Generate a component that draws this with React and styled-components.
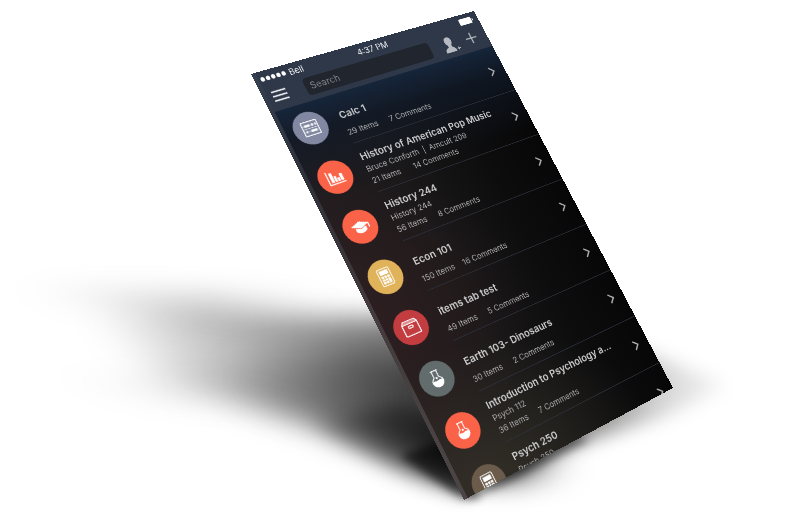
import React from "react";
import styled, { createGlobalStyle } from "styled-components";

const SCREEN_WIDTH = 375;
const SCREEN_HEIGHT = 667;

/* Corners of the tilted phone: top left, top right, bottom right, bottom left. */
const CORNERS = [
  [251, 74],
  [474, 11],
  [673, 388],
  [464, 500],
];

/* Perspective matrix that lays a w x h box onto four corners. */
function perspectiveOnto(w, h, [[x0, y0], [x1, y1], [x2, y2], [x3, y3]]) {
  const dx1 = x1 - x2;
  const dx2 = x3 - x2;
  const sx = x0 - x1 + x2 - x3;
  const dy1 = y1 - y2;
  const dy2 = y3 - y2;
  const sy = y0 - y1 + y2 - y3;
  const den = dx1 * dy2 - dx2 * dy1;
  const g = (sx * dy2 - dx2 * sy) / den;
  const k = (dx1 * sy - sx * dy1) / den;
  const m = [
    (x1 - x0 + g * x1) / w, (y1 - y0 + g * y1) / w, 0, g / w,
    (x3 - x0 + k * x3) / h, (y3 - y0 + k * y3) / h, 0, k / h,
    0, 0, 1, 0,
    x0, y0, 0, 1,
  ];
  return `matrix3d(${m.map((n) => n.toFixed(8)).join(",")})`;
}

const GlobalStyle = createGlobalStyle`
  *, *::before, *::after { box-sizing: border-box; }
  body {
    margin: 0;
    background: #fff;
    font-family: Inter, Roboto, "Liberation Sans", sans-serif;
  }
`;

const Page = styled.main`
  display: flex;
  justify-content: center;
  overflow: hidden;
`;

const Scene = styled.div`
  position: relative;
  flex: 0 1 796px;
  aspect-ratio: 398 / 261;
`;

const Shadow = styled.svg`
  display: block;
  width: 100%;
  height: 100%;
`;

const Phone = styled.div`
  position: absolute;
  top: 0;
  left: 0;
  width: ${SCREEN_WIDTH}px;
  height: ${SCREEN_HEIGHT}px;
  display: flex;
  flex-direction: column;
  overflow: hidden;
  transform-origin: 0 0;
  transform: ${perspectiveOnto(SCREEN_WIDTH, SCREEN_HEIGHT, CORNERS)};
  color: #cdcdcf;
  background:
    radial-gradient(ellipse 240px 200px at 0 390px, rgba(66, 34, 34, 0.35), transparent),
    radial-gradient(ellipse 280px 200px at 40px 667px, rgba(62, 58, 44, 0.6), transparent),
    linear-gradient(to bottom, #16253a 64px, rgba(17, 26, 40, 0.8) 110px, transparent 210px),
    linear-gradient(to right, #231d20, #1b191a 35%, #0d0d0e 72%, #070708);

  &::after {
    content: "";
    position: absolute;
    inset: 0 auto 0 0;
    width: 6px;
    background: linear-gradient(to bottom, #354050, #2f323b 25%, #423a3c 55%, #4b4645);
  }
`;

const Header = styled.header`
  flex: none;
  background: #2e3848;
`;

const StatusBar = styled.div`
  display: grid;
  grid-template-columns: 1fr auto 1fr;
  align-items: center;
  height: 25px;
  padding: 0 9px;
  font-size: 13px;
  color: #f4f4f6;
`;

const Carrier = styled.span`
  display: flex;
  align-items: center;
  gap: 2px;
`;

const SignalDot = styled.i`
  width: 6px;
  height: 7px;
  border-radius: 50%;
  background: #fff;
`;

const CarrierName = styled.span`
  margin-left: 3px;
`;

const Battery = styled.svg`
  justify-self: end;
  width: 25px;
  height: 11px;
`;

const NavBar = styled.div`
  display: flex;
  align-items: center;
  height: 39px;
  padding: 0 18px 6px 14px;
`;

const IconButton = styled.button`
  display: flex;
  flex: none;
  padding: 0;
  border: 0;
  background: none;
  color: ${(p) => p.$color || "#b7bac0"};
  cursor: pointer;
`;

const SearchField = styled.input`
  flex: 1;
  min-width: 0;
  height: 28px;
  margin: 0 23px 0 28px;
  padding: 0 8px;
  border: 0;
  border-radius: 6px;
  background: #20252e;
  color: #c9c9cb;
  font: 400 14px Inter, Roboto, sans-serif;

  &::placeholder {
    color: #85878b;
    opacity: 1;
  }
`;

const Actions = styled.div`
  display: flex;
  align-items: center;
  gap: 14px;
`;

const CourseList = styled.ul`
  flex: none;
  margin: 0;
  padding: 0;
  list-style: none;
`;

const CourseLink = styled.a`
  display: flex;
  height: 80px;
  padding-left: 18px;
  color: inherit;
  text-decoration: none;
`;

const Badge = styled.span`
  display: flex;
  flex: none;
  align-items: center;
  justify-content: center;
  width: 51px;
  height: 51px;
  margin: 13px 22px 0 0;
  border-radius: 50%;
  background: ${(p) => p.$color};
  color: #fff;
`;

const Details = styled.span`
  display: flex;
  flex: 1;
  align-items: center;
  justify-content: space-between;
  min-width: 0;
  padding-right: 17px;
  border-bottom: 1px solid #2d323d;
`;

const Lines = styled.span`
  display: flex;
  flex-direction: column;
  justify-content: flex-end;
  height: 100%;
  padding-bottom: 8px;
`;

const Title = styled.strong`
  margin-bottom: ${(p) => (p.$spaced ? "8px" : "0")};
  font-size: 15px;
  font-weight: 600;
  line-height: 20px;
  white-space: nowrap;
`;

const Subtitle = styled.span`
  font-size: 12px;
  font-weight: 400;
  line-height: 19px;
  white-space: pre;
  color: #adadaf;
`;

const Counts = styled.span`
  display: grid;
  grid-template-columns: 68px auto;
  font-size: 12px;
  font-weight: 400;
  line-height: 19px;
  color: #adadaf;
`;

const Chevron = styled.svg`
  flex: none;
  width: 10px;
  height: 16px;
`;

const Glyph = styled.svg`
  width: 27px;
  height: 27px;
`;

const AbacusIcon = () => (
  <Glyph viewBox="0 0 30 30" fill="none" stroke="currentColor">
    <rect x="2" y="3" width="26" height="24" rx="1" strokeWidth="1.6" />
    <path d="M3 10h24M3 15h24M3 20h24" strokeWidth="0.8" />
    <path d="M6 10h9M18 10h3M24 10h2M14 20h10M6 20h2" strokeWidth="4" />
  </Glyph>
);

const ChartIcon = () => (
  <Glyph viewBox="0 0 30 30" fill="currentColor">
    <path d="M1 3h2v22h26v2H1z" />
    <path d="M6 6h5v17H6zM12 13h4v10h-4zM17 17h4v6h-4zM22 11h5v12h-5z" />
  </Glyph>
);

const CapIcon = () => (
  <Glyph viewBox="0 0 30 30" fill="currentColor">
    <path d="M15 6 0 12l15 6 13-5v7h2v-8z" />
    <path d="M6 16v6c5 5 13 5 18 0v-6l-9 3z" />
  </Glyph>
);

const CalculatorIcon = () => (
  <Glyph viewBox="0 0 30 30" fill="currentColor">
    <rect x="5" y="1" width="20" height="28" rx="2" fill="none" stroke="currentColor" strokeWidth="1.5" />
    <path d="M8 4h14v7H8zM8 13h4v4H8zM13 13h4v4h-4zM18 13h4v4h-4zM8 18h4v3H8zM13 18h4v3h-4zM18 18h4v8h-4zM8 22h4v4H8zM13 22h4v4h-4z" />
  </Glyph>
);

const BoxIcon = () => (
  <Glyph viewBox="0 0 30 30" fill="none" stroke="currentColor" strokeWidth="1.8">
    <path d="M5 3h20l3 5v17a2 2 0 0 1-2 2H4a2 2 0 0 1-2-2V8z" />
    <path d="M2 8h26" />
    <path d="M4 5.5h22" strokeOpacity="0.5" />
    <rect x="11" y="12" width="8" height="3.5" rx="1.7" />
  </Glyph>
);

const FlaskIcon = () => (
  <Glyph viewBox="0 0 30 30" fill="none" stroke="currentColor" strokeWidth="1.6">
    <path d="M9 2h12M11 2v11c-3 2-5 4-5 7a9 8 0 0 0 18 0c0-3-2-5-5-7V2" />
    <path d="M7 19c4-2 5 2 8 0 3-1 5-1 8 0 0 6-3 9-8 9s-8-3-8-9z" fill="currentColor" />
    <circle cx="15" cy="14" r="1" fill="currentColor" />
  </Glyph>
);

const COURSES = [
  { title: "Calc 1", items: "29 Items", comments: "7 Comments", color: "#8288a2", Icon: AbacusIcon },
  { title: "History of American Pop Music", subtitle: "Bruce Conforth  |  Amcult 209", items: "21 Items", comments: "14 Comments", color: "#fb6348", Icon: ChartIcon },
  { title: "History 244", subtitle: "History 244", items: "56 Items", comments: "8 Comments", color: "#fb6348", Icon: CapIcon },
  { title: "Econ 101", items: "150 Items", comments: "16 Comments", color: "#e0b35b", Icon: CalculatorIcon },
  { title: "items tab test", items: "49 Items", comments: "5 Comments", color: "#c33d40", Icon: BoxIcon },
  { title: "Earth 103- Dinosaurs", items: "30 Items", comments: "2 Comments", color: "#626c6d", Icon: FlaskIcon },
  { title: "Introduction to Psychology a...", subtitle: "Psych 112", items: "36 Items", comments: "7 Comments", color: "#fb6348", Icon: FlaskIcon },
  { title: "Psych 250", subtitle: "Psych 250", items: "12 Items", comments: "4 Comments", color: "#6b5b4a", Icon: CalculatorIcon },
];

function Course({ title, subtitle, items, comments, color, Icon }) {
  return (
    <li>
      <CourseLink href="#">
        <Badge $color={color}>
          <Icon />
        </Badge>
        <Details>
          <Lines>
            <Title $spaced={!subtitle}>{title}</Title>
            {subtitle && <Subtitle>{subtitle}</Subtitle>}
            <Counts>
              <span>{items}</span>
              <span>{comments}</span>
            </Counts>
          </Lines>
          <Chevron viewBox="0 0 10 16" fill="none" stroke="#b0b1b4" strokeWidth="2.4">
            <path d="M1 1l7 7-7 7" />
          </Chevron>
        </Details>
      </CourseLink>
    </li>
  );
}

function GroundShadow() {
  return (
    <Shadow viewBox="0 0 796 522" aria-hidden="true">
      <defs>
        <linearGradient id="cast" gradientUnits="userSpaceOnUse" x1="80" y1="0" x2="460" y2="0">
          <stop offset="0" stopOpacity="0" />
          <stop offset="0.25" stopOpacity="0.14" />
          <stop offset="0.5" stopOpacity="0.34" />
          <stop offset="0.75" stopOpacity="0.5" />
          <stop offset="1" stopOpacity="0.6" />
        </linearGradient>
        <linearGradient id="core" gradientUnits="userSpaceOnUse" x1="220" y1="0" x2="460" y2="0">
          <stop offset="0" stopOpacity="0" />
          <stop offset="0.5" stopOpacity="0.28" />
          <stop offset="1" stopOpacity="0.56" />
        </linearGradient>
        <linearGradient id="tail" gradientUnits="userSpaceOnUse" x1="10" y1="0" x2="330" y2="0">
          <stop offset="0" stopOpacity="0" />
          <stop offset="0.6" stopOpacity="0.18" />
          <stop offset="1" stopOpacity="0" />
        </linearGradient>
        <linearGradient id="side" gradientUnits="userSpaceOnUse" x1="470" y1="0" x2="740" y2="0">
          <stop offset="0" stopOpacity="0.95" />
          <stop offset="0.4" stopOpacity="0.5" />
          <stop offset="0.7" stopOpacity="0.17" />
          <stop offset="1" stopOpacity="0" />
        </linearGradient>
        <filter id="wide" x="-30%" y="-80%" width="160%" height="260%">
          <feGaussianBlur stdDeviation="24 13" />
        </filter>
        <filter id="soft" x="-30%" y="-80%" width="160%" height="260%">
          <feGaussianBlur stdDeviation="18 15" />
        </filter>
        <filter id="medium" x="-30%" y="-50%" width="160%" height="200%">
          <feGaussianBlur stdDeviation="9" />
        </filter>
        <filter id="tight" x="-30%" y="-50%" width="160%" height="200%">
          <feGaussianBlur stdDeviation="4" />
        </filter>
      </defs>
      <path d="M10 285L330 298V335L180 325Z" fill="url(#tail)" filter="url(#wide)" />
      <path d="M60 375L320 375V415L160 400Z" fill="url(#tail)" fillOpacity="0.4" filter="url(#wide)" />
      <path d="M100 314L260 316L540 320V480L440 472L340 434L250 406L170 380Z" fill="url(#cast)" filter="url(#wide)" />
      <path d="M220 360L360 352L520 372V480L430 470L330 424L240 400Z" fill="url(#core)" filter="url(#soft)" />
      <path d="M310 424L400 405L480 430L464 496L400 470L345 444Z" fill="url(#core)" fillOpacity="0.9" filter="url(#medium)" />
      <path d="M400 456L445 440L480 498L462 498Z" fillOpacity="0.6" filter="url(#tight)" />
      <path d="M462 490L640 350L730 385L660 418L560 450Z" fill="url(#side)" filter="url(#medium)" />
      <path d="M464 500L560 430L590 440L500 486Z" fillOpacity="0.4" filter="url(#tight)" />
    </Shadow>
  );
}

export default function App() {
  return (
    <>
      <GlobalStyle />
      <Page>
        <Scene>
          <GroundShadow />
          <Phone>
            <Header>
              <StatusBar>
                <Carrier>
                  {[0, 1, 2, 3, 4].map((n) => (
                    <SignalDot key={n} />
                  ))}
                  <CarrierName>Bell</CarrierName>
                </Carrier>
                <span>4:37 PM</span>
                <Battery viewBox="0 0 27 12" fill="#fff">
                  <rect x="0" y="0" width="24" height="12" rx="2" />
                  <rect x="25" y="4" width="2" height="4" rx="1" />
                </Battery>
              </StatusBar>
              <NavBar>
                <IconButton type="button" aria-label="Menu" $color="#e6e7ea">
                  <svg width="22" height="18" viewBox="0 0 22 18" stroke="currentColor" strokeWidth="2.6">
                    <path d="M0 2h22M0 9h22M0 16h22" />
                  </svg>
                </IconButton>
                <SearchField type="search" aria-label="Search" placeholder="Search" />
                <Actions>
                  <IconButton type="button" aria-label="Add person">
                    <svg width="27" height="26" viewBox="0 0 27 26" fill="currentColor">
                      <path d="M10 0c-4 0-6 3-6 7 0 3 1 5 3 7v3c-3 2-6 2-7 6v3h18v-4c-1-2-2-3-5-5v-3c2-2 3-4 3-7 0-4-2-7-6-7z" />
                      <path d="M22 20h2v2h2v1h-2v2h-2v-2h-2v-1h2z" />
                    </svg>
                  </IconButton>
                  <IconButton type="button" aria-label="Add">
                    <svg width="19" height="19" viewBox="0 0 20 20" stroke="currentColor" strokeWidth="2.2">
                      <path d="M10 0v20M0 10h20" />
                    </svg>
                  </IconButton>
                </Actions>
              </NavBar>
            </Header>
            <CourseList>
              {COURSES.map((course) => (
                <Course key={course.title} {...course} />
              ))}
            </CourseList>
          </Phone>
        </Scene>
      </Page>
    </>
  );
}
